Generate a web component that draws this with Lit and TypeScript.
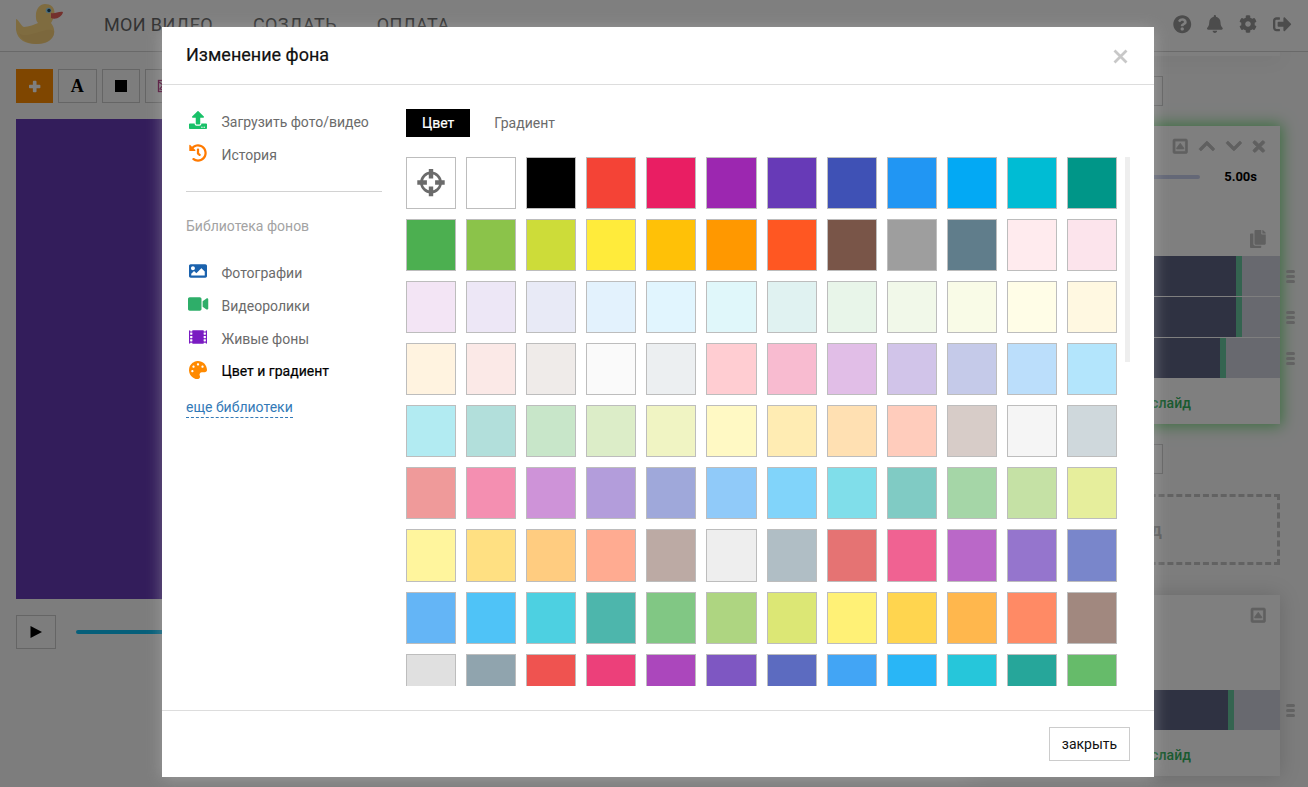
import { LitElement, html, css, svg } from "lit";
import { customElement, property } from "lit/decorators.js";
import { classMap } from "lit/directives/class-map.js";

type Glyph = { w: number; d: string };

const ICONS: Record<string, Glyph> = {
  question: { w: 512, d: "M504 256c0 136.997-111.043 248-248 248S8 392.997 8 256C8 119.083 119.043 8 256 8s248 111.083 248 248zM262.655 90c-54.497 0-89.255 22.957-116.549 63.758-3.536 5.286-2.353 12.415 2.715 16.258l34.699 26.31c5.205 3.947 12.621 3.008 16.665-2.122 17.864-22.658 30.113-35.797 57.303-35.797 20.429 0 45.698 13.148 45.698 32.958 0 14.976-12.363 22.667-32.534 33.976C247.128 238.528 216 254.941 216 296v4c0 6.627 5.373 12 12 12h56c6.627 0 12-5.373 12-12v-1.333c0-28.462 83.186-29.647 83.186-106.667 0-58.002-60.165-102-116.531-102zM256 338c-25.365 0-46 20.635-46 46 0 25.364 20.635 46 46 46s46-20.636 46-46c0-25.365-20.635-46-46-46z" },
  bell: { w: 448, d: "M224 512c35.32 0 63.97-28.65 63.97-64H160.03c0 35.35 28.65 64 63.97 64zm215.39-149.71c-19.32-20.76-55.47-51.99-55.47-154.29 0-77.7-54.48-139.9-127.94-155.16V32c0-17.67-14.32-32-31.98-32s-31.98 14.33-31.98 32v20.84C118.56 68.1 64.08 130.3 64.08 208c0 102.3-36.15 133.53-55.47 154.29-6 6.45-8.66 14.16-8.61 21.71.11 16.4 12.98 32 32.1 32h383.8c19.12 0 32-15.6 32.1-32 .05-7.55-2.61-15.27-8.61-21.71z" },
  cog: { w: 512, d: "M487.4 315.7l-42.6-24.6c4.3-23.2 4.3-47 0-70.2l42.6-24.6c4.9-2.8 7.1-8.6 5.5-14-11.1-35.6-30-67.8-54.7-94.6-3.8-4.1-10-5.1-14.8-2.3L380.8 110c-17.9-15.4-38.5-27.3-60.8-35.1V25.8c0-5.6-3.9-10.5-9.4-11.7-36.7-8.2-74.3-7.8-109.2 0-5.5 1.2-9.4 6.1-9.4 11.7V75c-22.2 7.9-42.8 19.8-60.8 35.1L88.7 85.5c-4.9-2.8-11-1.9-14.8 2.3-24.7 26.7-43.6 58.9-54.7 94.6-1.7 5.4.6 11.2 5.5 14L67.3 221c-4.3 23.2-4.3 47 0 70.2l-42.6 24.6c-4.9 2.8-7.1 8.6-5.5 14 11.1 35.6 30 67.8 54.7 94.6 3.8 4.1 10 5.1 14.8 2.3l42.6-24.6c17.9 15.4 38.5 27.3 60.8 35.1v49.2c0 5.6 3.9 10.5 9.4 11.7 36.7 8.2 74.3 7.8 109.2 0 5.5-1.2 9.4-6.1 9.4-11.7v-49.2c22.2-7.9 42.8-19.8 60.8-35.1l42.6 24.6c4.9 2.8 11 1.9 14.8-2.3 24.7-26.7 43.6-58.9 54.7-94.6 1.5-5.5-.7-11.3-5.6-14.1zM256 336c-44.1 0-80-35.9-80-80s35.9-80 80-80 80 35.9 80 80-35.9 80-80 80z" },
  signout: { w: 512, d: "M497 273L329 441c-15 15-41 4.5-41-17v-96H152c-13.3 0-24-10.7-24-24v-96c0-13.3 10.7-24 24-24h136V88c0-21.4 25.9-32 41-17l168 168c9.3 9.4 9.3 24.6 0 34zM192 436v-40c0-6.6-5.4-12-12-12H96c-17.7 0-32-14.3-32-32V160c0-17.7 14.3-32 32-32h84c6.6 0 12-5.4 12-12V76c0-6.6-5.4-12-12-12H96c-53 0-96 43-96 96v192c0 53 43 96 96 96h84c6.6 0 12-5.4 12-12z" },
  up: { w: 448, d: "M240.971 130.524l194.343 194.343c9.373 9.373 9.373 24.569 0 33.941l-22.667 22.667c-9.357 9.357-24.522 9.375-33.901.04L224 227.495 69.255 381.516c-9.379 9.335-24.544 9.317-33.901-.04l-22.667-22.667c-9.373-9.373-9.373-24.569 0-33.941L207.03 130.525c9.372-9.373 24.568-9.373 33.941-.001z" },
  down: { w: 448, d: "M207.029 381.476L12.686 187.132c-9.373-9.373-9.373-24.569 0-33.941l22.667-22.667c9.357-9.357 24.522-9.375 33.901-.04L224 284.505l154.745-154.021c9.379-9.335 24.544-9.317 33.901.04l22.667 22.667c9.373 9.373 9.373 24.569 0 33.941L240.971 381.476c-9.373 9.372-24.569 9.372-33.942 0z" },
  times: { w: 352, d: "M242.72 256l100.07-100.07c12.28-12.28 12.28-32.19 0-44.48l-22.24-22.24c-12.28-12.28-32.19-12.28-44.48 0L176 189.28 75.93 89.21c-12.28-12.28-32.19-12.28-44.48 0L9.21 111.45c-12.28 12.28-12.28 32.19 0 44.48L109.28 256 9.21 356.07c-12.28 12.28-12.28 32.19 0 44.48l22.24 22.24c12.28 12.28 32.2 12.28 44.48 0L176 322.72l100.07 100.07c12.28 12.28 32.2 12.28 44.48 0l22.24-22.24c12.28-12.28 12.28-32.19 0-44.48L242.72 256z" },
  copy: { w: 448, d: "M320 448v40c0 13.255-10.745 24-24 24H24c-13.255 0-24-10.745-24-24V120c0-13.255 10.745-24 24-24h72v296c0 30.879 25.121 56 56 56h168zm0-344V0H152c-13.255 0-24 10.745-24 24v368c0 13.255 10.745 24 24 24h272c13.255 0 24-10.745 24-24V128H344c-13.2 0-24-10.8-24-24zm120.971-31.029L375.029 7.029A24 24 0 0 0 358.059 0H352v96h96v-6.059a24 24 0 0 0-7.029-16.97z" },
  upload: { w: 512, d: "M296 384h-80c-13.3 0-24-10.7-24-24V192h-87.7c-17.8 0-26.7-21.5-14.1-34.1L242.3 5.7c7.5-7.5 19.8-7.5 27.3 0l152.2 152.2c12.6 12.6 3.7 34.1-14.1 34.1H320v168c0 13.3-10.7 24-24 24zm216-8v112c0 13.3-10.7 24-24 24H24c-13.3 0-24-10.7-24-24V376c0-13.3 10.7-24 24-24h136v8c0 30.9 25.1 56 56 56h80c30.9 0 56-25.1 56-56v-8h136c13.3 0 24 10.7 24 24zm-124 88c0-11-9-20-20-20s-20 9-20 20 9 20 20 20 20-9 20-20zm64 0c0-11-9-20-20-20s-20 9-20 20 9 20 20 20 20-9 20-20z" },
  history: { w: 512, d: "M504 255.531c.253 136.64-111.18 248.372-247.82 248.468-59.015.042-113.223-20.53-155.822-54.911-11.077-8.94-11.905-25.541-1.839-35.607l11.267-11.267c8.609-8.609 22.353-9.551 31.891-1.984C173.062 425.135 212.781 440 256 440c101.705 0 184-82.311 184-184 0-101.705-82.311-184-184-184-48.814 0-93.149 18.969-126.068 49.932l50.754 50.754c10.08 10.08 2.941 27.314-11.313 27.314H24c-8.837 0-16-7.163-16-16V38.627c0-14.254 17.234-21.393 27.314-11.314l49.372 49.372C129.209 34.136 189.552 8 256 8c136.81 0 247.747 110.78 248 247.531zm-180.912 78.784l9.823-12.63c8.138-10.463 6.253-25.542-4.21-33.679L288 256.349V152c0-13.255-10.745-24-24-24h-16c-13.255 0-24 10.745-24 24v135.651l65.409 50.874c10.463 8.137 25.541 6.253 33.679-4.21z" },
  image: { w: 512, d: "M464 448H48c-26.51 0-48-21.49-48-48V112c0-26.51 21.49-48 48-48h416c26.51 0 48 21.49 48 48v288c0 26.51-21.49 48-48 48zM112 120c-30.928 0-56 25.072-56 56s25.072 56 56 56 56-25.072 56-56-25.072-56-56-56zM64 384h384V272l-87.515-87.515c-4.686-4.686-12.284-4.686-16.971 0L208 320l-55.515-55.515c-4.686-4.686-12.284-4.686-16.971 0L64 336v48z" },
  video: { w: 576, d: "M336.2 64H47.8C21.4 64 0 85.4 0 111.8v288.4C0 426.6 21.4 448 47.8 448h288.4c26.4 0 47.8-21.4 47.8-47.8V111.8c0-26.4-21.4-47.8-47.8-47.8zm189.4 37.7L416 177.3v157.4l109.6 75.5c21.2 14.6 50.4-.3 50.4-25.8V127.5c0-25.4-29.1-40.4-50.4-25.8z" },
  film: { w: 512, d: "M488 64h-8v20c0 6.6-5.4 12-12 12h-40c-6.6 0-12-5.4-12-12V64H96v20c0 6.6-5.4 12-12 12H44c-6.6 0-12-5.4-12-12V64h-8C10.7 64 0 74.7 0 88v336c0 13.3 10.7 24 24 24h8v-20c0-6.6 5.4-12 12-12h40c6.6 0 12 5.4 12 12v20h320v-20c0-6.6 5.4-12 12-12h40c6.6 0 12 5.4 12 12v20h8c13.3 0 24-10.7 24-24V88c0-13.3-10.7-24-24-24zM32 140c0-6.6 5.4-12 12-12h40c6.6 0 12 5.4 12 12v40c0 6.6-5.4 12-12 12H44c-6.6 0-12-5.4-12-12zm0 96c0-6.6 5.4-12 12-12h40c6.6 0 12 5.4 12 12v40c0 6.6-5.4 12-12 12H44c-6.6 0-12-5.4-12-12zm0 96c0-6.6 5.4-12 12-12h40c6.6 0 12 5.4 12 12v40c0 6.6-5.4 12-12 12H44c-6.6 0-12-5.4-12-12zM416 140c0-6.6 5.4-12 12-12h40c6.6 0 12 5.4 12 12v40c0 6.6-5.4 12-12 12h-40c-6.6 0-12-5.4-12-12zm0 96c0-6.6 5.4-12 12-12h40c6.6 0 12 5.4 12 12v40c0 6.6-5.4 12-12 12h-40c-6.6 0-12-5.4-12-12zm0 96c0-6.6 5.4-12 12-12h40c6.6 0 12 5.4 12 12v40c0 6.6-5.4 12-12 12h-40c-6.6 0-12-5.4-12-12z" },
  palette: { w: 512, d: "M204.3 5C104.9 24.4 24.8 104.3 5.2 203.4c-37 187 131.7 326.4 258.8 306.7 41.2-6.4 61.4-54.6 42.5-91.7-23.1-45.4 9.9-98.4 60.9-98.4h79.7c35.8 0 64.8-29.6 64.9-65.3C511.5 97.1 368.1-26.9 204.3 5zM96 320c-17.7 0-32-14.3-32-32s14.3-32 32-32 32 14.3 32 32-14.3 32-32 32zm32-128c-17.7 0-32-14.3-32-32s14.3-32 32-32 32 14.3 32 32-14.3 32-32 32zm128-64c-17.7 0-32-14.3-32-32s14.3-32 32-32 32 14.3 32 32-14.3 32-32 32zm128 64c-17.7 0-32-14.3-32-32s14.3-32 32-32 32 14.3 32 32-14.3 32-32 32z" },
  plus: { w: 448, d: "M416 184H296V64c0-17.67-14.33-32-32-32h-80c-17.67 0-32 14.33-32 32v120H32c-17.67 0-32 14.33-32 32v80c0 17.67 14.33 32 32 32h120v120c0 17.67 14.33 32 32 32h80c17.67 0 32-14.33 32-32V328h120c17.67 0 32-14.33 32-32v-80c0-17.67-14.33-32-32-32z" },
  caretbox: { w: 448, d: "M48 32h352a48 48 0 0 1 48 48v352a48 48 0 0 1-48 48H48a48 48 0 0 1-48-48V80a48 48 0 0 1 48-48zM64 96v320h320V96zM224 160L335 310v30H113v-30z" },
};

@customElement("ui-icon")
export class UiIcon extends LitElement {
  @property() name = "";
  @property({ type: Number }) size = 16;
  @property({ type: Number }) bold = 0;
  static styles = css`
    :host { display: inline-flex; flex: none; }
    svg { display: block; fill: currentColor; stroke: currentColor; overflow: visible; }
  `;
  render() {
    const g = ICONS[this.name];
    return html`<svg width=${(this.size * g.w) / 512} height=${this.size} viewBox="0 0 ${g.w} 512" stroke-width=${this.bold}>${svg`<path fill-rule="evenodd" d=${g.d}></path>`}</svg>`;
  }
}

@customElement("slide-track")
export class SlideTrack extends LitElement {
  @property({ type: Number }) rest = 38;
  static styles = css`
    :host { display: flex; position: relative; height: 40px; }
    .body { flex: 1; background: #5e6484; }
    .edge { width: 6px; background: #68c8a0; }
    .rest { background: #d1d2de; }
    .grip { position: absolute; left: calc(100% + 6px); top: 14px; display: grid; gap: 2px; }
    .grip i { width: 9px; height: 3px; border-radius: 1.5px; background: #c4c4c4; }
  `;
  render() {
    return html`<div class="body"></div><div class="edge"></div>
      <div class="rest" style="width:${this.rest}px"></div>
      <div class="grip"><i></i><i></i><i></i></div>`;
  }
}

const PALETTE = `
- ffffff 000000 f44336 e91e63 9c27b0 673ab7 3f51b5 2196f3 03a9f4 00bcd4 009688
4caf50 8bc34a cddc39 ffeb3b ffc107 ff9800 ff5722 795548 9e9e9e 607d8b ffebee fce4ec
f3e5f5 ede7f6 e8eaf6 e3f2fd e1f5fe e0f7fa e0f2f1 e8f5e9 f1f8e9 f9fbe7 fffde7 fff8e1
fff3e0 fbe9e7 efebe9 fafafa eceff1 ffcdd2 f8bbd0 e1bee7 d1c4e9 c5cae9 bbdefb b3e5fc
b2ebf2 b2dfdb c8e6c9 dcedc8 f0f4c3 fff9c4 ffecb3 ffe0b2 ffccbc d7ccc8 f5f5f5 cfd8dc
ef9a9a f48fb1 ce93d8 b39ddb 9fa8da 90caf9 81d4fa 80deea 80cbc4 a5d6a7 c5e1a5 e6ee9c
fff59d ffe082 ffcc80 ffab91 bcaaa4 eeeeee b0bec5 e57373 f06292 ba68c8 9575cd 7986cb
64b5f6 4fc3f7 4dd0e1 4db6ac 81c784 aed581 dce775 fff176 ffd54f ffb74d ff8a65 a1887f
e0e0e0 90a4ae ef5350 ec407a ab47bc 7e57c2 5c6bc0 42a5f5 29b6f6 26c6da 26a69a 66bb6a`
  .trim()
  .split(/\s+/);

const SOURCES = [
  { icon: "upload", tone: "green", label: "Загрузить фото/видео" },
  { icon: "history", tone: "orange", label: "История" },
];

const LIBRARY = [
  { icon: "image", tone: "blue", label: "Фотографии" },
  { icon: "video", tone: "mint", label: "Видеоролики" },
  { icon: "film", tone: "violet", label: "Живые фоны" },
  { icon: "palette", tone: "amber", label: "Цвет и градиент", active: true },
];

@customElement("background-dialog")
export class BackgroundDialog extends LitElement {
  static styles = css`
    :host { display: flex; flex-direction: column; box-sizing: border-box; background: #fff; color: #6b6b6b;
      font: 14px/20px Roboto, sans-serif; box-shadow: 0 2px 15px rgba(192, 192, 192, 0.45); }
    .head { height: 57px; flex: none; display: flex; align-items: center; justify-content: space-between;
      padding: 0 24px; border-bottom: 1px solid #ddd; }
    .title { font-size: 18px; color: #111; margin-top: -2px; -webkit-text-stroke: 0.2px #111; }
    .close { color: #c8c8c8; display: flex; margin: 1px 2px 0 0; }
    .main { flex: 1; min-height: 0; display: flex; padding: 24px; gap: 24px; }
    .side { width: 196px; flex: none; }
    .item { display: flex; align-items: center; height: 33px; }
    .item.tall { height: 32px; }
    .pic { width: 24px; display: flex; justify-content: center; margin: -3px 11.5px 0 0; }
    .item.active { color: #000; -webkit-text-stroke: 0.2px #000; }
    .sources { margin-top: -4px; }
    .green { color: #18c168; } .orange { color: #ff7a00; } .blue { color: #1b62ad; }
    .mint { color: #2eae69; } .violet { color: #7a1bc2; } .amber { color: #ff8a00; }
    .rule { height: 1px; background: #d2d2d2; margin: 20px 0 24px; }
    .caption { color: #a3a3a3; margin-bottom: 20px; }
    .more { display: inline-block; color: #337ab7; line-height: 19px; border-bottom: 1px dashed #337ab7; margin-top: 11px; }
    .pane { flex: 1; min-width: 0; display: flex; flex-direction: column; }
    .tabs { display: flex; gap: 8px; height: 28px; line-height: 28px; margin-bottom: 20px; flex: none; }
    .tab { padding: 0 16px; }
    .tab.on { background: #000; color: #fff; -webkit-text-stroke: 0.2px #fff; }
    .scroll { flex: 1; min-height: 0; display: flex; gap: 8px; overflow: hidden; }
    .grid { width: 711.2px; flex: none; display: grid; grid-template-columns: repeat(12, 1fr); grid-auto-rows: 52.08px; gap: 10px; align-content: start; }
    .swatch { box-sizing: border-box; border: 1px solid #bdbdbd; display: flex; align-items: center; justify-content: center; }
    .bar { width: 5px; height: 205px; background: #eee; flex: none; }
    .foot { height: 66px; flex: none; border-top: 1px solid #ddd; display: flex; align-items: center; justify-content: flex-end; padding: 0 24px; }
    .button { box-sizing: border-box; width: 81px; height: 34px; border: 1px solid #ccc; color: #111; line-height: 32px; text-align: center; }
  `;

  private item(i: { icon: string; tone: string; label: string; active?: boolean }) {
    return html`<div class=${classMap({ item: true, active: !!i.active, tall: !!i.active })}>
      <span class="pic ${i.tone}"><ui-icon name=${i.icon} size="18"></ui-icon></span><span>${i.label}</span>
    </div>`;
  }

  render() {
    return html`
      <div class="head"><span class="title">Изменение фона</span>
        <span class="close"><svg width="15" height="15" viewBox="0 0 15 15"><path d="M1.5 1.5L13.5 13.5M13.5 1.5L1.5 13.5" stroke="currentColor" stroke-width="2.8" /></svg></span>
      </div>
      <div class="main">
        <div class="side">
          <div class="sources">${SOURCES.map((i) => this.item(i))}</div>
          <div class="rule"></div>
          <div class="caption">Библиотека фонов</div>
          ${LIBRARY.map((i) => this.item(i))}
          <span class="more">еще библиотеки</span>
        </div>
        <div class="pane">
          <div class="tabs"><span class="tab on">Цвет</span><span class="tab">Градиент</span></div>
          <div class="scroll">
            <div class="grid">
              ${PALETTE.map((c) =>
                c === "-"
                  ? html`<div class="swatch"><svg width="28" height="28" viewBox="0 0 28 28" fill="none" stroke="#6b6b6b">
                      <circle cx="14" cy="13.5" r="9.6" stroke-width="2.6" />
                      <path d="M14 2V7.200M14 19.800V25M2.500 13.500H7.700M20.300 13.500H25.500" stroke-width="4.400" stroke-linecap="square" />
                    </svg></div>`
                  : html`<div class="swatch" style="background:#${c}"></div>`
              )}
            </div>
            <div class="bar"></div>
          </div>
        </div>
      </div>
      <div class="foot"><div class="button">закрыть</div></div>
    `;
  }
}

@customElement("app-root")
export class AppRoot extends LitElement {
  static styles = css`
    :host { display: block; position: relative; width: 1308px; height: 787px; overflow: hidden; background: #fafafa;
      font: 14px/20px Roboto, sans-serif; color: #000; }
    .top { position: relative; z-index: 1; height: 51px; background: #fff; border-bottom: 1px solid #d2d2d2; display: flex; align-items: center;
      padding: 0 16px; }
    .duck { display: block; margin: -3px 41px 0 0; }
    .nav { display: flex; gap: 40px; font-size: 18px; color: #666; flex: 1; letter-spacing: 0.36px; margin-top: -2px; }
    .tools { display: flex; align-items: center; gap: 16px; color: #989898; margin: -3px 0.5px 0 0; }
    .work { display: flex; justify-content: space-between; height: 735px; }
    .editor { padding: 17px 0 0 16px; width: 700px; }
    .bar { display: flex; gap: 5px; height: 34px; margin-bottom: 16px; }
    .btn { box-sizing: border-box; border: 1px solid #cacaca; width: 38.6px; display: flex; align-items: center; justify-content: center; }
    .btn.add { background: #ff8c00; border-color: #ff8c00; color: #fff; width: 37px; }
    .serif { font: bold 18px/1 "Liberation Serif", serif; }
    .square { width: 12px; height: 12px; background: #000; }
    .canvas { height: 480px; background: #673ab7; }
    .player { display: flex; align-items: center; gap: 20px; margin-top: 16px; }
    .play { width: 40px; height: 34px; }
    .line { flex: 1; height: 4px; border-radius: 2px; background: #0cbff5; }
    .slides { width: 308px; padding-right: 28px; display: flex; flex-direction: column; }
    .card { box-sizing: border-box; background: #fff; box-shadow: 0 0 20px rgba(0, 0, 0, 0.16); flex: none; }
    .card.first { height: 4px; margin-bottom: 20px; }
    .card.current { height: 298px; box-shadow: 0 0 14px 2px #78dc80; margin: 20px 0; }
    .card.last { height: 181px; margin-top: 30px; }
    .count { box-sizing: border-box; width: 191px; height: 30px; border: 1px solid #cacaca; flex: none; }
    .acts { display: flex; justify-content: flex-end; align-items: center; gap: 11px; height: 40px; padding-right: 15px; color: #c0c0c0; }
    .times { margin-left: 1px; }
    .timing { display: flex; align-items: center; justify-content: flex-end; height: 22px; padding-right: 23px; gap: 24px; font-weight: 700; font-size: 13px; }
    .range { flex: 1; height: 4px; border-radius: 2px; background: #c8d0ee; }
    .dup { display: flex; justify-content: flex-end; padding: 42px 14px 0 0; height: 26px; color: #c0c0c0; }
    .tracks { display: grid; gap: 1px; }
    .pad { height: 55px; }
    .addslide { color: #35b45f; font-weight: 500; text-align: right; padding: 15px 89px 0 0; letter-spacing: 0.1px; }
    .drop { box-sizing: border-box; height: 71px; flex: none; margin-top: 20px; border: 3px dashed #c4c4c4; color: #b4b4b4; font-size: 18px; font-weight: 500;
      text-align: right; line-height: 66px; padding-right: 115px; }
    .shade { position: absolute; inset: 0; z-index: 2; background: rgba(0, 0, 0, 0.5); padding: 27px 0 0 162px; }
    .dialog { width: 992px; height: 750px; }
  `;

  render() {
    return html`
      <div class="top">
        <svg class="duck" width="47" height="41" viewBox="0 0 47 41">
          <path d="M20 14C19 5 24 0 29 0C36 0 40 5 38 12C37 16 36 17 35 19C39 24 40 31 34 36C28 41 14 41 7 37C0 33 -1 25 0 15C3 16 5 22 8 23C12 23 20 20 22 19C21 18 20 16 20 14Z" fill="#ffd980" />
          <path d="M3 29C8 34 18 29 27 27C31 26 34 25 38 27C39 32 35 37 29 39C19 42 6 39 3 29Z" fill="#f1c873" opacity=".5" />
          <path d="M35 9C39 10 43 7 47 8C46 13 40 16 35 14Z" fill="#e9625a" />
          <circle cx="32.5" cy="6.500" r="2.800" fill="#9fd8f0" /><circle cx="33" cy="6.500" r="1.700" fill="#1c4a66" />
        </svg>
        <div class="nav"><span>МОИ ВИДЕО</span><span>СОЗДАТЬ</span><span>ОПЛАТА</span></div>
        <div class="tools">
          <ui-icon name="question" size="18.5"></ui-icon><ui-icon name="bell" size="18"></ui-icon>
          <ui-icon name="cog" size="18"></ui-icon><ui-icon name="signout" size="18.5"></ui-icon>
        </div>
      </div>
      <div class="work">
        <div class="editor">
          <div class="bar">
            <div class="btn add"><ui-icon name="plus" size="13"></ui-icon></div>
            <div class="btn"><span class="serif">A</span></div>
            <div class="btn"><span class="square"></span></div>
            <div class="btn"><svg width="14" height="14" viewBox="0 0 14 14" fill="none" stroke="#a0186b" stroke-width="1.3"><rect x="1.5" y="1.5" width="11" height="11" /><path d="M2 3L6 6L3 10L9 12" /></svg></div>
          </div>
          <div class="canvas"></div>
          <div class="player">
            <div class="btn play"><svg width="12" height="12" viewBox="0 0 12 12"><path d="M.5 0L12 6L.5 12Z" /></svg></div>
            <div class="line"></div>
          </div>
        </div>
        <div class="slides">
          <div class="card first"></div>
          <div class="count"></div>
          <div class="card current">
            <div class="acts">
              <ui-icon name="caretbox" size="16.5" bold="22"></ui-icon><ui-icon name="up" size="18" bold="24"></ui-icon>
              <ui-icon name="down" size="18" bold="24"></ui-icon><ui-icon class="times" name="times" size="17" bold="24"></ui-icon>
            </div>
            <div class="timing"><div class="range"></div><span>5.00s</span></div>
            <div class="dup"><ui-icon name="copy" size="18"></ui-icon></div>
            <div class="tracks">
              <slide-track rest="38"></slide-track><slide-track rest="38"></slide-track><slide-track rest="54"></slide-track>
            </div>
            <div class="addslide">слайд</div>
          </div>
          <div class="count"></div>
          <div class="drop">Слайд</div>
          <div class="card last">
            <div class="acts"><ui-icon name="caretbox" size="16.5" bold="22"></ui-icon></div>
            <div class="pad"></div>
            <slide-track rest="46"></slide-track>
            <div class="addslide">слайд</div>
          </div>
        </div>
      </div>
      <div class="shade"><background-dialog class="dialog"></background-dialog></div>
    `;
  }
}
